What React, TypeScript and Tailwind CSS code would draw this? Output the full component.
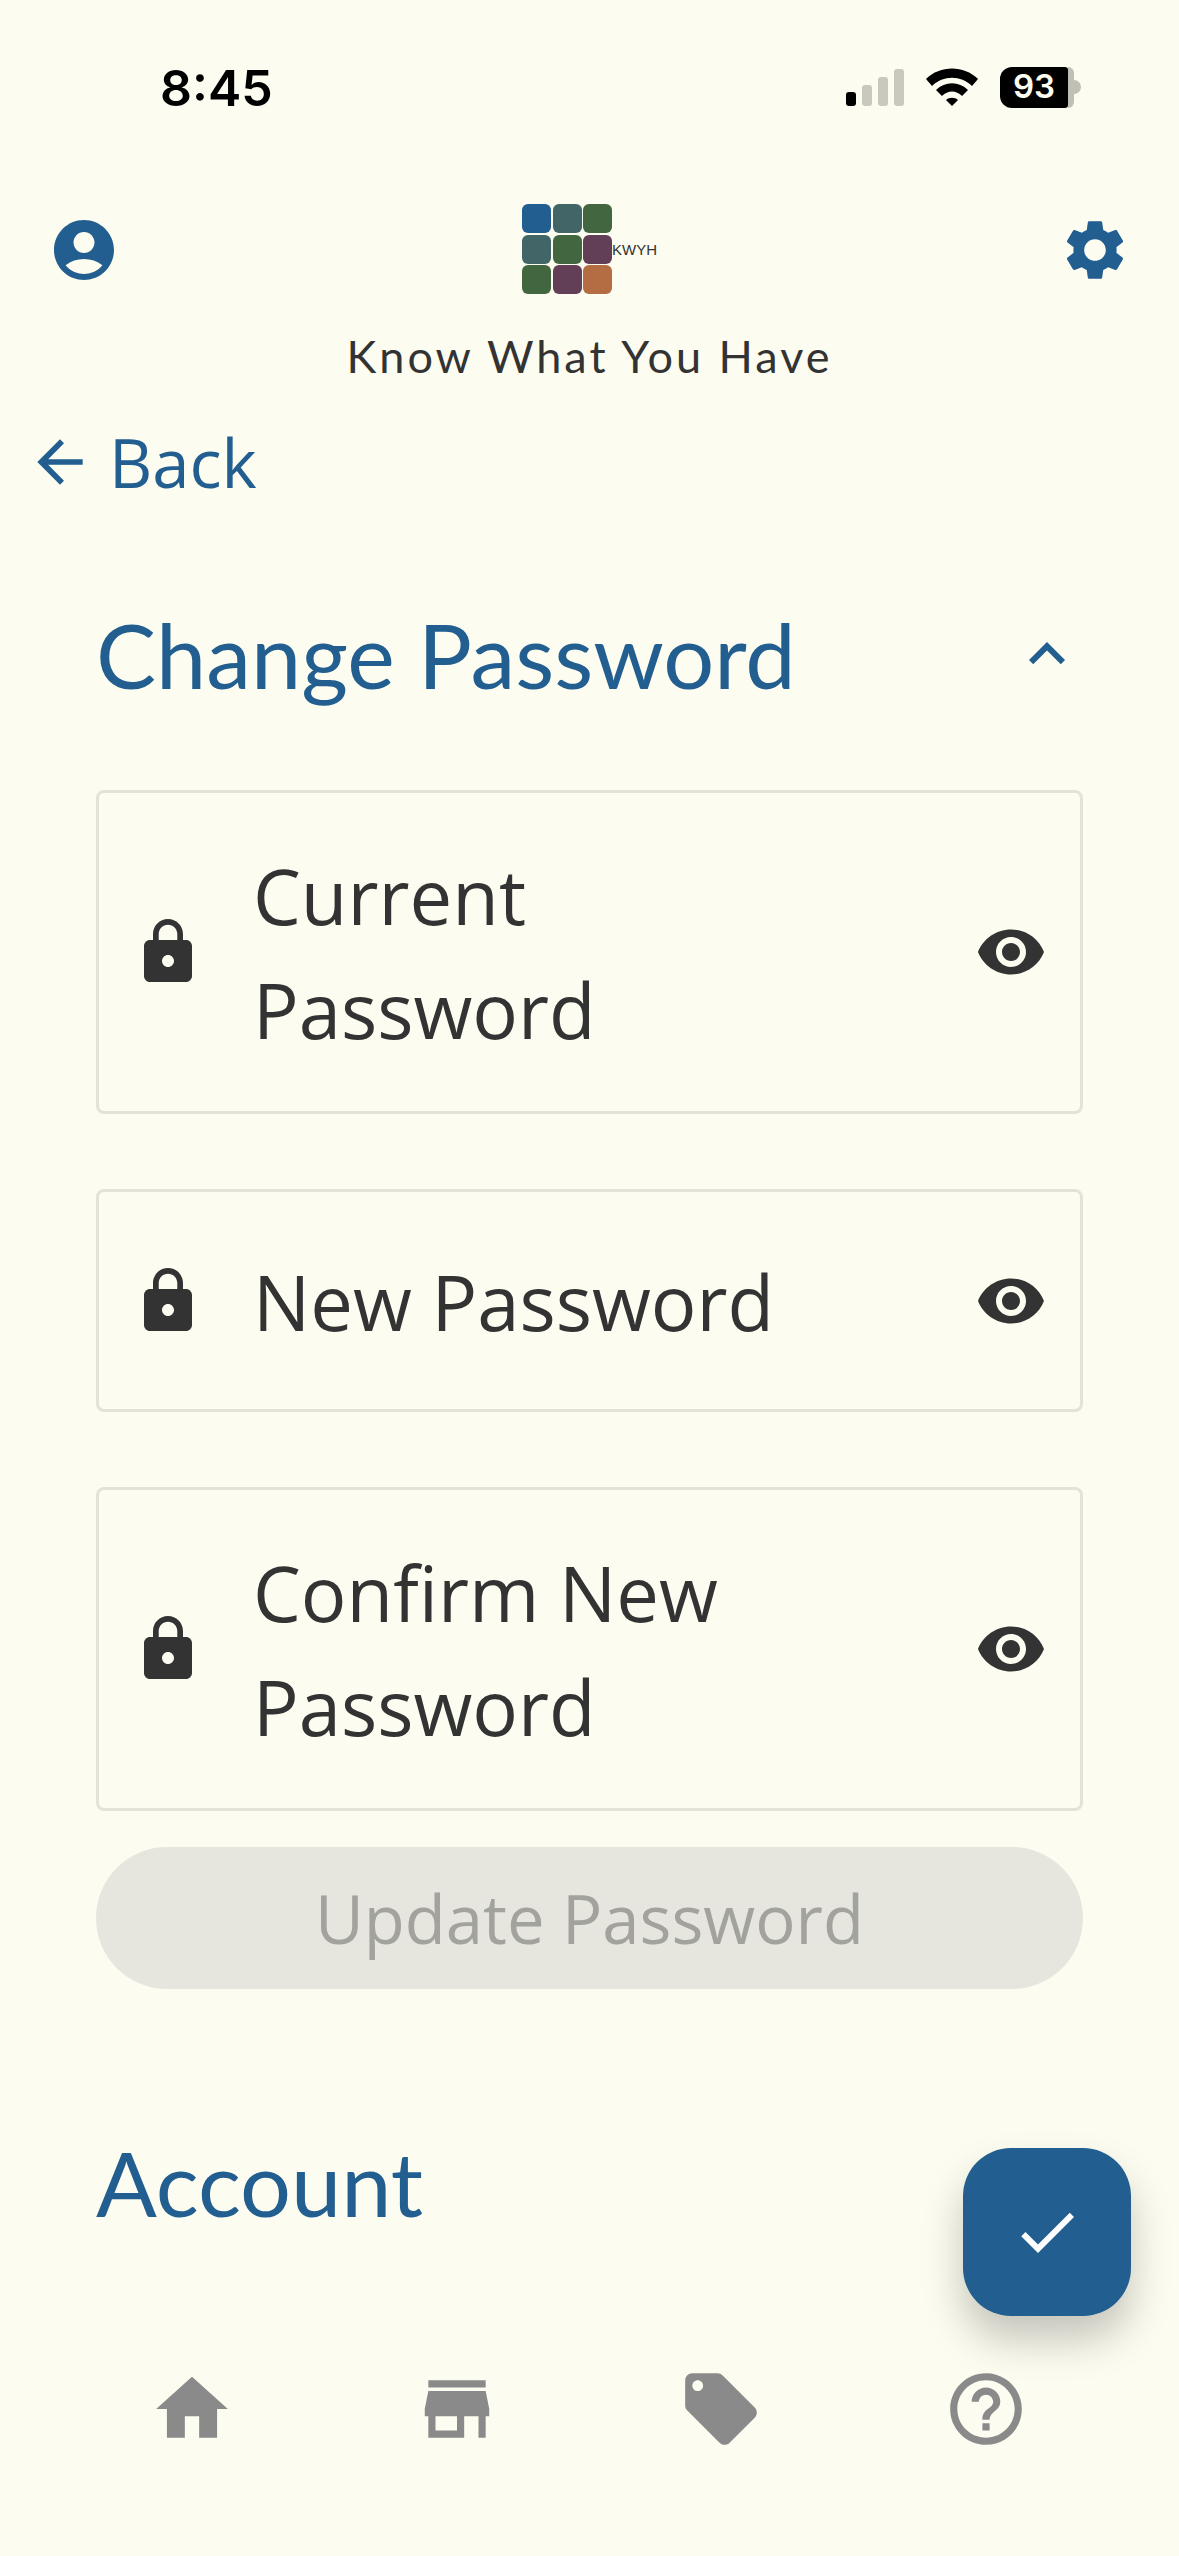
// Change password screen with a status bar, header, form cards and bottom nav.
import { MdAccountCircle, MdArrowBack, MdCheck, MdExpandLess, MdHelpOutline, MdHome, MdLocalOffer, MdLock, MdSettings, MdStore, MdVisibility } from 'react-icons/md';

const logoColors = ['#225e8f', '#426567', '#426740', '#426567', '#426740', '#623f57', '#426740', '#623f57', '#b46d42'];

function StatusBar() {
  return (
    <div className="flex h-[174px] items-center justify-between pr-[98px] pl-[160px]">
      <span className="pt-[2px] font-['Inter',sans-serif] text-[50px] font-semibold leading-none text-black">8:45</span>
      <div className="flex items-center">
        <div className="flex h-[37px] items-end gap-[6px]">
          <div className="h-[14px] w-[10px] rounded-[3px] bg-black" />
          <div className="h-[21px] w-[10px] rounded-[3px] bg-[#c9c9bf]" />
          <div className="h-[29px] w-[10px] rounded-[3px] bg-[#c9c9bf]" />
          <div className="h-[37px] w-[10px] rounded-[3px] bg-[#c9c9bf]" />
        </div>
        <svg viewBox="0 0 52 38" className="ml-[22px] h-[38px] w-[52px]">
          <path d="M0 11C14-3 38-3 52 11L46 18C35 7 17 7 6 18Z" />
          <path d="M10 22C19 13 33 13 42 22L36 28C30 22 22 22 16 28Z" />
          <path d="M20 32C23 29 29 29 32 32L26 38Z" />
        </svg>
        <div className="ml-[22px] flex items-center">
          <div className="flex h-[41px] w-[68px] items-center justify-center rounded-l-[12px] rounded-r-[3px] bg-black font-['Inter',sans-serif] text-[33px] font-semibold text-[#fcfcf0]">93</div>
          <div className="h-[41px] w-[6px] rounded-r-[8px] bg-[#c0c0b6]" />
          <div className="h-[14px] w-[7px] rounded-r-full bg-[#c0c0b6]" />
        </div>
      </div>
    </div>
  );
}

function Logo() {
  return (
    <div className="flex items-center">
      <div className="grid w-[90px] grid-cols-3 gap-[1.5px]">
        {logoColors.map((c, i) => (
          <div key={i} className="h-[29px] rounded-[6px]" style={{ backgroundColor: c }} />
        ))}
      </div>
      <span className="font-['Liberation_Sans',sans-serif] text-[15px] leading-none text-[#333]">KWYH</span>
    </div>
  );
}

function PasswordField({ label, tall }: { label: string; tall?: boolean }) {
  return (
    <div className={`flex items-center rounded-[8px] border-[3px] border-[#e3e3da] pr-[33px] pl-[33px] ${tall ? 'h-[324px]' : 'h-[223px]'}`}>
      <MdLock className="h-[72px] w-[72px] shrink-0 text-[#333]" />
      <div className="ml-[49px] w-[570px] pt-[2px] font-['Open_Sans',sans-serif] text-[76px] leading-[114px] text-[#333]">{label}</div>
      <MdVisibility className="ml-auto h-[72px] w-[72px] shrink-0 text-[#333]" />
    </div>
  );
}

export default function App() {
  return (
    <div className="relative h-[2556px] w-[1179px] overflow-hidden bg-[#fcfcf0]">
      <StatusBar />

      <header className="flex items-start justify-between px-[48px]">
        <MdAccountCircle className="mt-[40px] h-[72px] w-[72px] text-[#225e8f]" />
        <div className="flex flex-col items-center pt-[30px]">
          <Logo />
          <div className="mt-[36px] font-['Lato',sans-serif] text-[45px] leading-[52px] tracking-[3px] text-[#333]">Know What You Have</div>
        </div>
        <MdSettings className="mt-[40px] h-[72px] w-[72px] text-[#225e8f]" />
      </header>

      <div className="mt-[40px] flex items-center pl-[26px] text-[#225e8f]">
        <MdArrowBack className="h-[68px] w-[68px]" />
        <span className="ml-[15px] font-['Open_Sans',sans-serif] text-[67px] leading-[80px]">Back</span>
      </div>

      <main className="px-[96px]">
        <div className="mt-[98px] flex items-center justify-between">
          <h1 className="font-['Lato',sans-serif] text-[90px] font-normal leading-[108px] text-[#225e8f]">Change Password</h1>
          <MdExpandLess className="h-[72px] w-[72px] text-[#225e8f]" />
        </div>

        <div className="mt-[82px] flex flex-col gap-[75px]">
          <PasswordField label="Current Password" tall />
          <PasswordField label="New Password" />
          <PasswordField label="Confirm New Password" tall />
        </div>

        <button className="mt-[36px] flex h-[142px] w-full items-center justify-center rounded-full bg-[#e6e6df] font-['Open_Sans',sans-serif] text-[67px] text-[#a3a39d]">
          Update Password
        </button>

        <h2 className="mt-[139px] font-['Lato',sans-serif] text-[90px] font-normal leading-[108px] text-[#225e8f]">Account</h2>
      </main>

      <div className="absolute top-[2148px] left-[963px] flex h-[168px] w-[168px] items-center justify-center rounded-[48px] bg-[#225e8f] shadow-[0_24px_40px_rgba(0,0,0,0.22)]">
        <MdCheck className="h-[72px] w-[72px] text-white" />
      </div>

      <nav className="absolute top-[2366px] left-0 flex w-full items-center justify-between pr-[150px] pl-[149px] text-[#8a8a8a]">
        <MdHome className="h-[86px] w-[86px]" />
        <MdStore className="h-[86px] w-[86px]" />
        <MdLocalOffer className="h-[86px] w-[86px]" />
        <MdHelpOutline className="h-[86px] w-[86px]" />
      </nav>
    </div>
  );
}
